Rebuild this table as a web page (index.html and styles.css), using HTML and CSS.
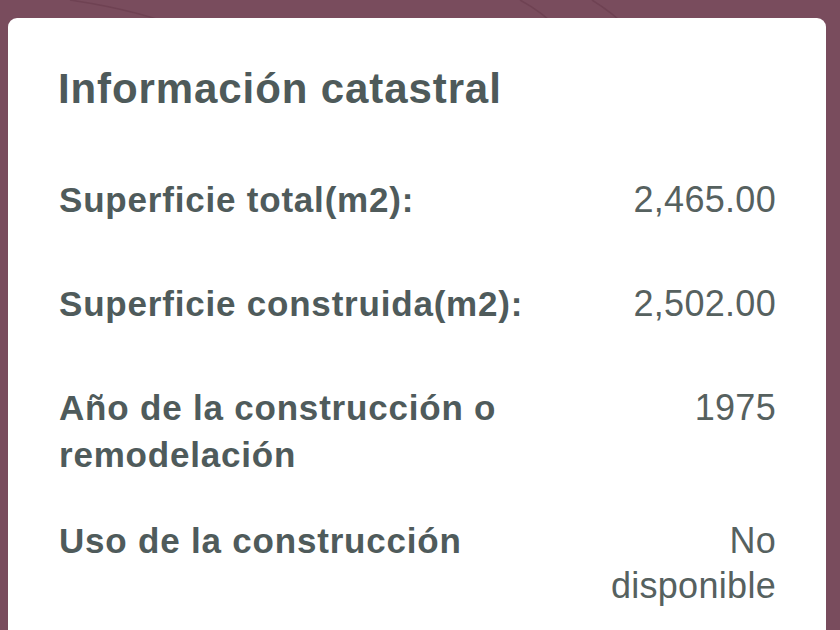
FILE: index.html
```html
<!DOCTYPE html>
<html lang="es">
<head>
<meta charset="utf-8">
<title>Información catastral</title>
<link rel="stylesheet" href="styles.css">
</head>
<body>
<div class="page">
  <svg class="bg-lines" width="840" height="60" viewBox="0 0 840 60" aria-hidden="true">
    <path d="M70 0 C 110 6, 150 14, 185 30" />
    <path d="M520 0 C 535 8, 548 18, 560 30" />
    <path d="M592 0 C 605 8, 618 18, 630 30" />
  </svg>
  <section class="card">
    <h2 class="title">Información catastral</h2>
    <div class="rows">
      <div class="row">
        <div class="label">Superficie total(m2):</div>
        <div class="value">2,465.00</div>
      </div>
      <div class="row">
        <div class="label">Superficie construida(m2):</div>
        <div class="value">2,502.00</div>
      </div>
      <div class="row">
        <div class="label">Año de la construcción o remodelación</div>
        <div class="value">1975</div>
      </div>
      <div class="row">
        <div class="label">Uso de la construcción</div>
        <div class="value">No disponible</div>
      </div>
    </div>
  </section>
</div>
</body>
</html>
```

FILE: styles.css
```css
html, body {
  margin: 0;
  padding: 0;
  height: 100%;
  overflow: hidden;
}

body {
  background: #794c5d;
  font-family: "Liberation Sans", Arial, sans-serif;
}

.page {
  position: relative;
  padding: 18px 14px 0 8px;
}

.bg-lines {
  position: absolute;
  top: 0;
  left: 0;
}

.bg-lines path {
  fill: none;
  stroke: #6f4253;
  stroke-width: 1.5;
}

.card {
  position: relative;
  background: #ffffff;
  border-radius: 9px;
  padding: 46px 50px 40px 50px;
  min-height: 700px;
}

.title {
  margin: 0;
  font-size: 42px;
  line-height: 50px;
  font-weight: bold;
  letter-spacing: 0.9px;
  color: #4e5a5a;
}

.rows {
  margin-top: 62px;
  display: flex;
  flex-direction: column;
  gap: 39px;
}

.row {
  display: grid;
  grid-template-columns: 1fr 180px;
  align-items: baseline;
  min-height: 65px;
}

.label {
  font-size: 35px;
  line-height: 47px;
  font-weight: bold;
  letter-spacing: 0.8px;
  color: #4f5b5b;
  padding-left: 1px;
}

.value {
  font-size: 36px;
  line-height: 45px;
  letter-spacing: 0.3px;
  color: #56615f;
  text-align: right;
}
```
